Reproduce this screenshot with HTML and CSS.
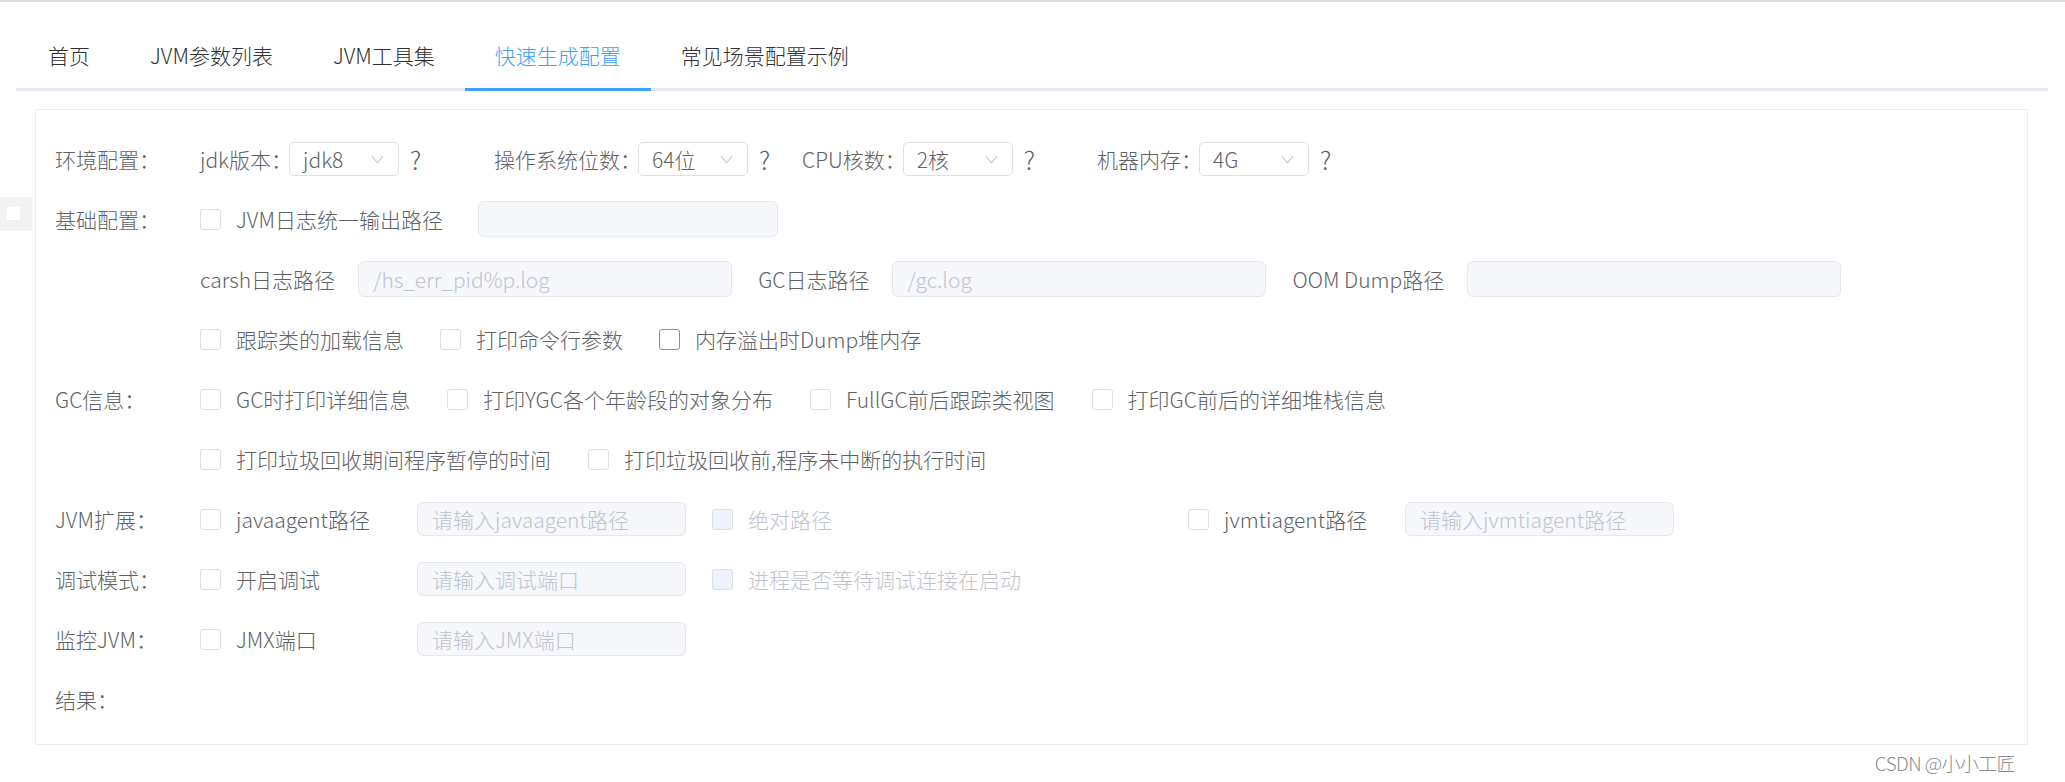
FILE: index.html
```html
<!DOCTYPE html>
<html lang="zh-CN">
<head>
<meta charset="utf-8">
<title>快速生成配置</title>
<link rel="stylesheet" href="styles.css">
</head>
<body>
<div class="topbar"></div>
<div class="side-toggle"><span></span></div>

<div class="tabs">
  <div class="tabs-nav">
    <div class="tab">首页</div>
    <div class="tab">JVM参数列表</div>
    <div class="tab">JVM工具集</div>
    <div class="tab active">快速生成配置</div>
    <div class="tab">常见场景配置示例</div>
  </div>
</div>

<div class="panel">
  <div class="form-row">
    <div class="row-label">环境配置：</div>
    <div class="row-body">
      <div class="env-group g1">
        <span class="field-label">jdk版本：</span>
        <div class="select"><span>jdk8</span><svg class="arrow" viewBox="0 0 14 9"><polyline points="1,1 7,8 13,1"/></svg></div>
        <span class="help">?</span>
      </div>
      <div class="env-group g2">
        <span class="field-label">操作系统位数：</span>
        <div class="select"><span>64位</span><svg class="arrow" viewBox="0 0 14 9"><polyline points="1,1 7,8 13,1"/></svg></div>
        <span class="help">?</span>
      </div>
      <div class="env-group g3">
        <span class="field-label">CPU核数：</span>
        <div class="select"><span>2核</span><svg class="arrow" viewBox="0 0 14 9"><polyline points="1,1 7,8 13,1"/></svg></div>
        <span class="help">?</span>
      </div>
      <div class="env-group">
        <span class="field-label">机器内存：</span>
        <div class="select"><span>4G</span><svg class="arrow" viewBox="0 0 14 9"><polyline points="1,1 7,8 13,1"/></svg></div>
        <span class="help">?</span>
      </div>
    </div>
  </div>

  <div class="form-row">
    <div class="row-label">基础配置：</div>
    <div class="row-body">
      <label class="check"><span class="box"></span><span class="check-text">JVM日志统一输出路径</span></label>
      <div class="input w300"></div>
    </div>
  </div>

  <div class="form-row">
    <div class="row-label"></div>
    <div class="row-body">
      <span class="path-label">carsh日志路径</span>
      <div class="input w374"><span class="val">/hs_err_pid%p.log</span></div>
      <span class="path-label">GC日志路径</span>
      <div class="input w374"><span class="val">/gc.log</span></div>
      <span class="path-label">OOM Dump路径</span>
      <div class="input w374"></div>
    </div>
  </div>

  <div class="form-row">
    <div class="row-label"></div>
    <div class="row-body">
      <label class="check"><span class="box"></span><span class="check-text">跟踪类的加载信息</span></label>
      <label class="check"><span class="box"></span><span class="check-text">打印命令行参数</span></label>
      <label class="check"><span class="box focus"></span><span class="check-text">内存溢出时Dump堆内存</span></label>
    </div>
  </div>

  <div class="form-row">
    <div class="row-label">GC信息：</div>
    <div class="row-body">
      <label class="check wide"><span class="box"></span><span class="check-text">GC时打印详细信息</span></label>
      <label class="check wide"><span class="box"></span><span class="check-text">打印YGC各个年龄段的对象分布</span></label>
      <label class="check wide"><span class="box"></span><span class="check-text">FullGC前后跟踪类视图</span></label>
      <label class="check wide"><span class="box"></span><span class="check-text">打印GC前后的详细堆栈信息</span></label>
    </div>
  </div>

  <div class="form-row">
    <div class="row-label"></div>
    <div class="row-body">
      <label class="check wide"><span class="box"></span><span class="check-text">打印垃圾回收期间程序暂停的时间</span></label>
      <label class="check wide"><span class="box"></span><span class="check-text">打印垃圾回收前,程序未中断的执行时间</span></label>
    </div>
  </div>

  <div class="form-row">
    <div class="row-label">JVM扩展：</div>
    <div class="row-body">
      <label class="check fixed"><span class="box"></span><span class="check-text">javaagent路径</span></label>
      <div class="input w269"><span class="ph">请输入javaagent路径</span></div>
      <label class="check disabled col-wide"><span class="box"></span><span class="check-text">绝对路径</span></label>
      <label class="check fixed"><span class="box"></span><span class="check-text">jvmtiagent路径</span></label>
      <div class="input w269"><span class="ph">请输入jvmtiagent路径</span></div>
    </div>
  </div>

  <div class="form-row">
    <div class="row-label">调试模式：</div>
    <div class="row-body">
      <label class="check fixed"><span class="box"></span><span class="check-text">开启调试</span></label>
      <div class="input w269"><span class="ph">请输入调试端口</span></div>
      <label class="check disabled col-wide"><span class="box"></span><span class="check-text">进程是否等待调试连接在启动</span></label>
    </div>
  </div>

  <div class="form-row">
    <div class="row-label">监控JVM：</div>
    <div class="row-body">
      <label class="check fixed"><span class="box"></span><span class="check-text">JMX端口</span></label>
      <div class="input w269"><span class="ph">请输入JMX端口</span></div>
    </div>
  </div>

  <div class="form-row">
    <div class="row-label">结果：</div>
    <div class="row-body"></div>
  </div>
</div>

<div class="watermark">CSDN @小小工匠</div>
</body>
</html>
```

FILE: styles.css
```css
* {
  box-sizing: border-box;
}

html, body {
  margin: 0;
  padding: 0;
  background: #ffffff;
}

body {
  font-family: "Noto Sans CJK SC", "Noto Sans", sans-serif;
  font-weight: 300;
  font-size: 21px;
  color: #606266;
  width: 2065px;
  height: 782px;
  overflow: hidden;
  position: relative;
}

.topbar {
  height: 2px;
  background: #dcdcdc;
}

.side-toggle {
  position: absolute;
  left: 0;
  top: 197px;
  width: 32px;
  height: 34px;
  background: #f2f2f2;
  border-radius: 0 3px 3px 0;
}

.side-toggle span {
  position: absolute;
  left: 7px;
  top: 10px;
  width: 13px;
  height: 13px;
  background: #ffffff;
}

.tabs {
  margin: 26px 17px 0 16px;
}

.tabs-nav {
  display: flex;
  padding-left: 2px;
  border-bottom: 3px solid #e4e7ed;
}

.tab {
  position: relative;
  height: 60px;
  line-height: 54px;
  padding: 0 30px;
  font-size: 21px;
  color: #303133;
  white-space: nowrap;
}

.tab.active {
  color: #409eff;
}

.tab.active::after {
  content: "";
  position: absolute;
  left: 0;
  right: 0;
  bottom: -3px;
  height: 3px;
  background: #409eff;
}

.panel {
  margin: 18px 37px 0 35px;
  border: 1px solid #ebeef5;
  padding: 19px 20px 15px 19px;
}

.form-row {
  display: flex;
  align-items: center;
  height: 60px;
}

.row-label {
  width: 145px;
  flex: none;
  white-space: nowrap;
  line-height: 30px;
}

.row-body {
  display: flex;
  align-items: center;
  white-space: nowrap;
  line-height: 30px;
}

.env-group {
  display: flex;
  align-items: center;
}

.env-group.g1 { width: 294px; }
.env-group.g2 { width: 308px; }
.env-group.g3 { width: 295px; }

.field-label {
  color: #606266;
  margin-right: -3px;
}

.select {
  display: flex;
  align-items: center;
  justify-content: space-between;
  width: 110px;
  height: 34px;
  padding: 0 14px 0 13px;
  border: 1px solid #dcdfe6;
  border-radius: 5px;
  color: #606266;
}

.arrow {
  width: 13px;
  height: 9px;
}

.arrow polyline {
  fill: none;
  stroke: #c0c4cc;
  stroke-width: 1.2;
}

.help {
  margin-left: 11px;
  font-size: 25px;
  color: #606266;
}

.check {
  display: flex;
  align-items: center;
  margin-right: 36px;
}

.check.wide {
  margin-right: 37px;
}

.check.fixed {
  width: 217px;
  margin-right: 0;
}

.check.col-wide {
  width: 476px;
  margin-left: 26px;
  margin-right: 0;
}

.box {
  width: 21px;
  height: 21px;
  flex: none;
  border: 1px solid #dcdfe6;
  border-radius: 3px;
  background: #ffffff;
}

.box.focus {
  border-color: #409eff;
}

.check-text {
  margin-left: 15px;
  color: #606266;
}

.check.disabled .box {
  background: #edf2fc;
  border-color: #dcdfe6;
}

.check.disabled .check-text {
  color: #c0c4cc;
}

.input {
  display: flex;
  align-items: center;
  height: 36px;
  padding-left: 14px;
  background: #f5f7fa;
  border: 1px solid #e4e7ed;
  border-radius: 6px;
  color: #c0c4cc;
}

.input.w300 {
  width: 300px;
  margin-left: 0;
}

.check + .input.w300 {
  margin-left: -1px;
}

.input.w374 {
  width: 374px;
  margin: 0 26px 0 23px;
}

.input.w269 {
  width: 269px;
  height: 34px;
}

.val, .ph {
  color: #c0c4cc;
}

.path-label {
  color: #606266;
}

.watermark {
  height: 36px;
  line-height: 36px;
  text-align: right;
  padding-right: 50px;
  font-size: 19px;
  letter-spacing: -0.6px;
  color: #8c8c8c;
}
```
